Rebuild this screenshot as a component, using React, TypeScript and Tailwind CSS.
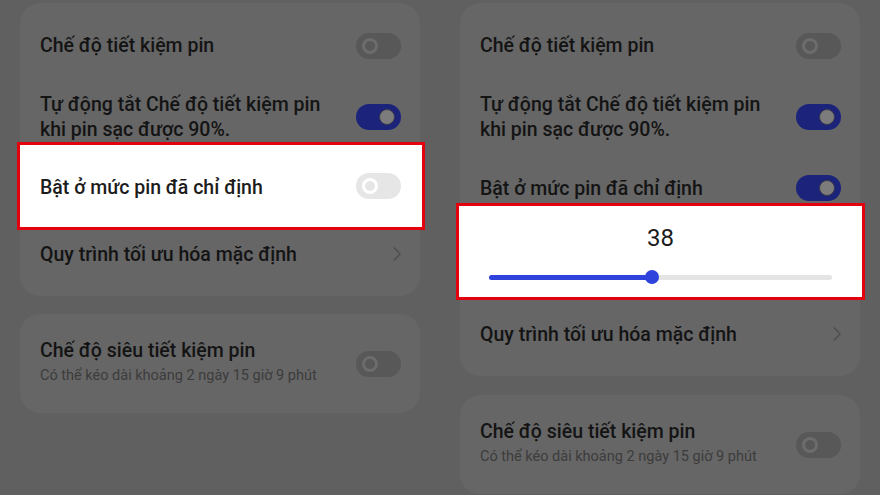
import React from 'react';

const font = { fontFamily: 'Roboto, "Noto Sans", sans-serif' };

type ToggleKind = 'off-dim' | 'on-dim' | 'off-light';

function Toggle({ kind }: { kind: ToggleKind }) {
  if (kind === 'on-dim') {
    return (
      <div className="flex h-[26px] w-[45px] shrink-0 items-center justify-end rounded-full bg-[#1b237a] pr-[6px]">
        <div className="h-[16px] w-[16px] rounded-full border border-[#3a3a4a] bg-[#7c7c7c]" />
      </div>
    );
  }
  const light = kind === 'off-light';
  return (
    <div
      className={
        light
          ? 'flex h-[26px] w-[45px] shrink-0 items-center rounded-full bg-[#e6e6e6] pl-[6px]'
          : 'flex h-[26px] w-[45px] shrink-0 items-center rounded-full bg-[#585858] pl-[6px]'
      }
    >
      <div
        className={
          light
            ? 'h-[16px] w-[16px] rounded-full border-[3px] border-white'
            : 'h-[16px] w-[16px] rounded-full border-[3px] border-[#6c6c6c]'
        }
      />
    </div>
  );
}

function Chevron() {
  return (
    <svg width="8" height="16" viewBox="0 0 8 16" className="shrink-0">
      <polyline points="1,1.5 7,8 1,14.5" fill="none" stroke="#4e4e4e" strokeWidth="1.4" />
    </svg>
  );
}

const title = 'text-[19.5px] font-medium leading-[25px] text-[#141414]';

function SuperSaver() {
  return (
    <div className="flex h-[99px] items-center justify-between rounded-[20px] bg-[#666666] pl-5 pr-[19px]">
      <div className="pb-[4px]">
        <div className={title}>Chế độ siêu tiết kiệm pin</div>
        <div className="mt-[3px] text-[14.5px] leading-[20px] text-[#3c3c3c]">
          Có thể kéo dài khoảng 2 ngày 15 giờ 9 phút
        </div>
      </div>
      <Toggle kind="off-dim" />
    </div>
  );
}

function TopRows() {
  return (
    <>
      <div className="flex h-[85px] items-center justify-between pl-5 pr-[19px]">
        <span className={title}>Chế độ tiết kiệm pin</span>
        <Toggle kind="off-dim" />
      </div>
      <div className="flex h-[54px] items-center justify-between pl-5 pr-[19px] pt-[3px]">
        <span className={title}>
          Tự động tắt Chế độ tiết kiệm pin
          <br />
          khi pin sạc được 90%.
        </span>
        <Toggle kind="on-dim" />
      </div>
    </>
  );
}

function LeftPanel() {
  return (
    <div className="flex h-[495px] w-[440px] flex-col gap-[18px] bg-[#606060] px-5 pt-[3px]">
      <div className="flex flex-col rounded-[20px] bg-[#666666] pb-[18px]">
        <TopRows />
        <div className="-ml-[3px] -mr-[5px] flex h-[88px] items-center justify-between border-[3px] border-[#e3000f] bg-white pl-5 pr-[21px]">
          <span className="pt-[2px] text-[19.5px] font-medium leading-[25px] text-[#1c1c1c]">
            Bật ở mức pin đã chỉ định
          </span>
          <Toggle kind="off-light" />
        </div>
        <div className="flex h-[48px] items-center justify-between pl-5 pr-[19px]">
          <span className={title}>Quy trình tối ưu hóa mặc định</span>
          <Chevron />
        </div>
      </div>
      <SuperSaver />
    </div>
  );
}

function RightPanel() {
  const pct = 47.5;
  return (
    <div className="flex h-[495px] w-[440px] flex-col gap-[19px] bg-[#606060] px-5 pt-[3px]">
      <div className="flex flex-col rounded-[20px] bg-[#666666] pb-[8px]">
        <TopRows />
        <div className="flex h-[61px] items-center justify-between pl-5 pr-[19px] pt-[31px]">
          <span className={title}>Bật ở mức pin đã chỉ định</span>
          <Toggle kind="on-dim" />
        </div>
        <div className="-ml-[4px] -mr-[5px] flex h-[97px] flex-col border-[3px] border-[#e3000f] bg-white px-[30px] pt-[18px]">
          <div className="text-center text-[24px] leading-[28px] text-[#1c1c1c]">38</div>
          <div className="relative mt-[18px] h-[14px]">
            <div className="absolute left-0 right-0 top-[5px] h-[5px] rounded-full bg-[#e4e4e4]" />
            <div
              className="absolute left-0 top-[5px] h-[5px] rounded-full bg-[#2f42dc]"
              style={{ width: `${pct}%` }}
            />
            <div
              className="absolute top-0 h-[14px] w-[14px] -translate-x-1/2 rounded-full bg-[#2f42dc]"
              style={{ left: `${pct}%` }}
            />
          </div>
        </div>
        <div className="flex h-[68px] items-center justify-between pl-5 pr-[19px]">
          <span className={title}>Quy trình tối ưu hóa mặc định</span>
          <Chevron />
        </div>
      </div>
      <SuperSaver />
    </div>
  );
}

export default function App() {
  return (
    <div className="flex h-[495px] w-[880px] overflow-hidden" style={font}>
      <LeftPanel />
      <RightPanel />
    </div>
  );
}
